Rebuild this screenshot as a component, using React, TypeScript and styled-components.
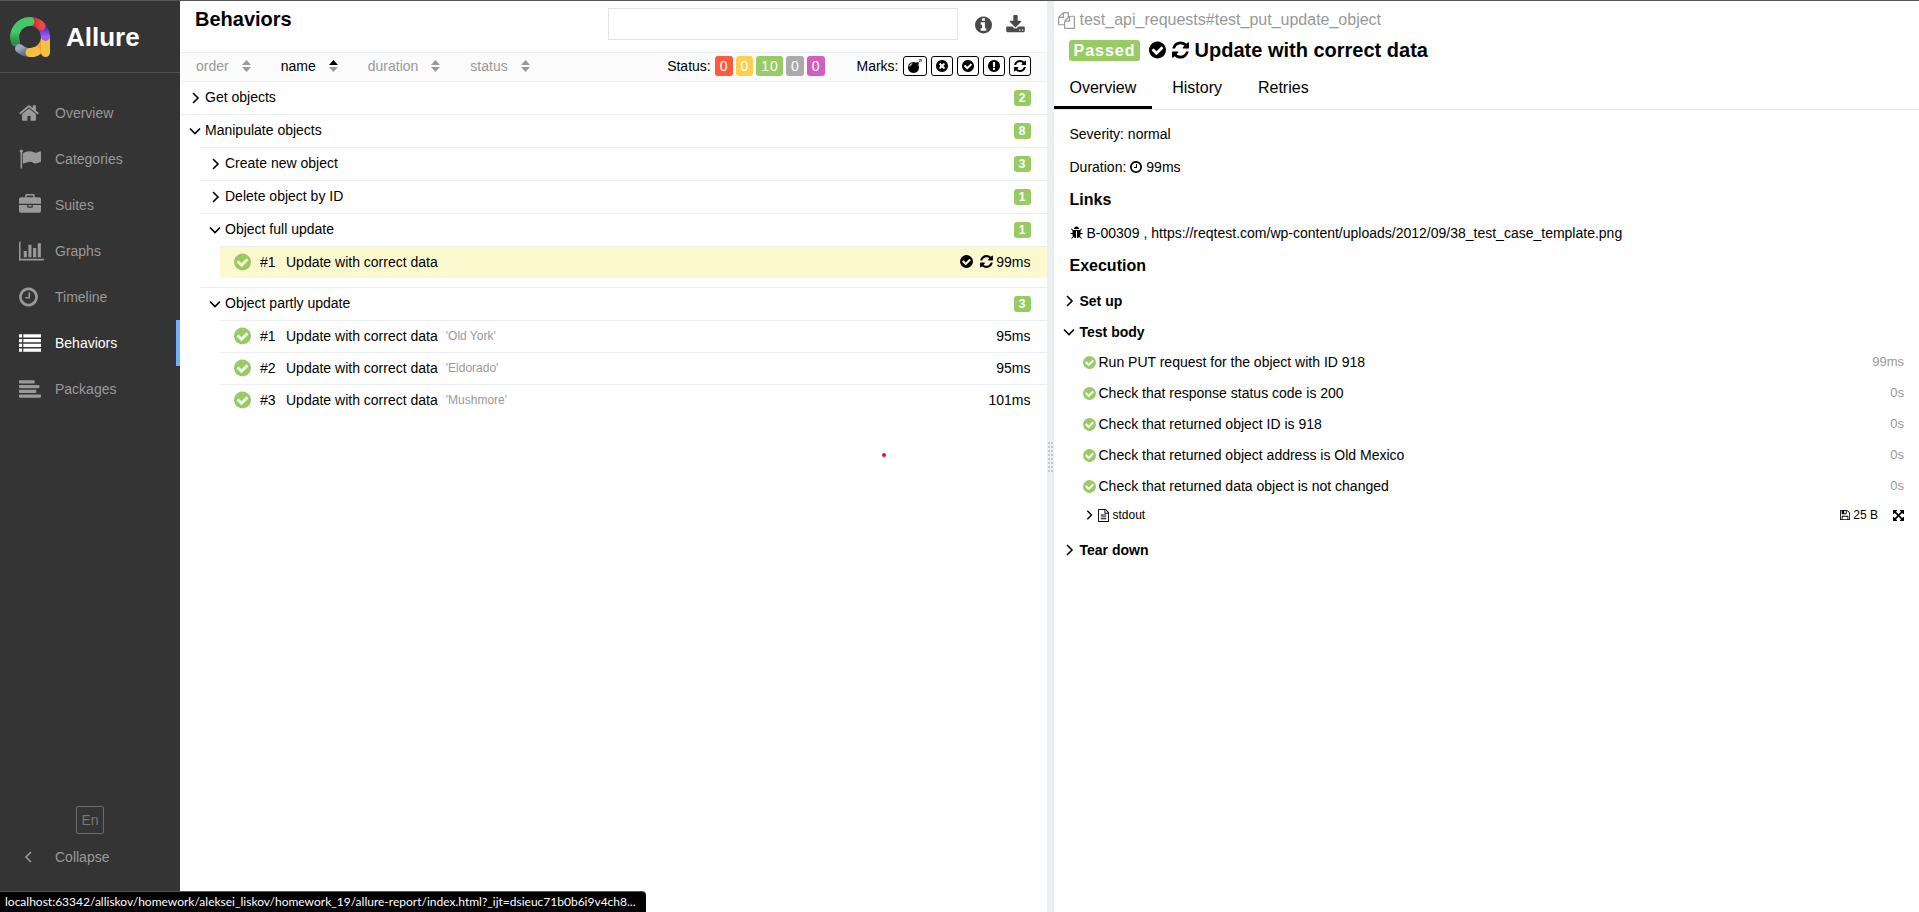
import React from 'react';
import styled, { createGlobalStyle, css } from 'styled-components';

const GlobalStyle = createGlobalStyle`
  *, *::before, *::after { box-sizing: border-box; }
  html, body, #root { height: 100%; }
  body {
    margin: 0;
    background: #fff;
    color: #000;
    font: 14px/20px "Liberation Sans", Arial, sans-serif;
  }
  button, input { font: inherit; color: inherit; }
  a { color: inherit; text-decoration: none; }
  ul { list-style: none; margin: 0; padding: 0; }
  h1, h2, h3, p { margin: 0; }
`;

/* ---------- icons ---------- */

const DISC =
  'M896 128q209 0 385.5 103t279.5 279.5 103 385.5-103 385.5-279.5 279.5-385.5 103-385.5-103-279.5-279.5-103-385.5 103-385.5 279.5-279.5 385.5-103z';

type Glyph = { d: string; x?: number; w?: number };

const glyphs = {
  home: {
    x: 64,
    w: 1664,
    d: 'M1472 992v480q0 26-19 45t-45 19h-384v-384h-256v384h-384q-26 0-45-19t-19-45v-480q0-1 .5-3t.5-3l575-474 575 474q1 2 1 6zm223-69l-62 74q-8 9-21 11h-3q-13 0-21-7l-692-577-692 577q-12 8-24 7-13-2-21-11l-62-74q-8-10-7-23.5t11-21.5l719-599q32-26 76-26t76 26l244 204v-195q0-14 9-23t23-9h192q14 0 23 9t9 23v408l219 182q10 8 11 21.5t-7 23.5z',
  },
  flag: {
    d: 'M320 256q0 72-64 110v1266q0 13-9.5 22.5t-22.5 9.5h-64q-13 0-22.5-9.5t-9.5-22.5v-1266q-64-38-64-110 0-53 37.5-90.5t90.5-37.5 90.5 37.5 37.5 90.5zm1472 64v763q0 25-12.5 38.5t-39.5 27.5q-215 116-369 116-61 0-123.5-22t-108.5-48-115.5-48-142.5-22q-192 0-464 146-17 9-33 9-26 0-45-19t-19-45v-742q0-32 31-55 21-14 79-43 236-120 421-120 107 0 200 29t219 88q38 19 88 19 54 0 117.5-21t110-47 88-47 54.5-21q26 0 45 19t19 45z',
  },
  briefcase: {
    d: 'M640 256h512v-128h-512v128zm1152 640v480q0 66-47 113t-113 47h-1472q-66 0-113-47t-47-113v-480h672v160q0 26 19 45t45 19h320q26 0 45-19t19-45v-160h672zm-768 0v128h-256v-128h256zm768-480v384h-1792v-384q0-66 47-113t113-47h352v-160q0-40 28-68t68-28h576q40 0 68 28t28 68v160h352q66 0 113 47t47 113z',
  },
  chart: {
    w: 2048,
    d: 'M640 896v512h-256v-512h256zm384-512v1024h-256v-1024h256zm1024 1152v128h-2048v-1536h128v1408h1920zm-640-896v768h-256v-768h256zm384-384v1152h-256v-1152h256z',
  },
  clock: {
    x: 128,
    w: 1536,
    d: 'M1024 544v448q0 14-9 23t-23 9h-320q-14 0-23-9t-9-23v-64q0-14 9-23t23-9h224v-352q0-14 9-23t23-9h64q14 0 23 9t9 23zm416 352q0-148-73-273t-198-198-273-73-273 73-198 198-73 273 73 273 198 198 273 73 273-73 198-198 73-273zm224 0q0 209-103 385.5t-279.5 279.5-385.5 103-385.5-103-279.5-279.5-103-385.5 103-385.5 279.5-279.5 385.5-103 385.5 103 279.5 279.5 103 385.5z',
  },
  list: {
    d: 'M0 192h256v256h-256zM352 192h1440v256h-1440zM0 576h256v256h-256zM352 576h1440v256h-1440zM0 960h256v256h-256zM352 960h1440v256h-1440zM0 1344h256v256h-256zM352 1344h1440v256h-1440z',
  },
  alignLeft: {
    d: 'M64 192h1152q64 0 64 64v128q0 64-64 64h-1152q-64 0-64-64v-128q0-64 64-64zM64 576h1536q64 0 64 64v128q0 64-64 64h-1536q-64 0-64-64v-128q0-64 64-64zM64 960h1280q64 0 64 64v128q0 64-64 64h-1280q-64 0-64-64v-128q0-64 64-64zM64 1344h1664q64 0 64 64v128q0 64-64 64h-1664q-64 0-64-64v-128q0-64 64-64z',
  },
  check: {
    x: 128,
    w: 1536,
    d:
      DISC +
      'M1412 734q0-28-18-46l-91-90q-19-19-45-19t-45 19l-408 407-226-226q-19-19-45-19t-45 19l-91 90q-18 18-18 46 0 27 18 45l362 362q19 19 45 19 27 0 46-19l543-543q18-18 18-45z',
  },
  times: {
    x: 128,
    w: 1536,
    d:
      DISC +
      'M1277 1122q0-26-19-45l-181-181 181-181q19-19 19-45 0-27-19-46l-90-90q-19-19-46-19-26 0-45 19l-181 181-181-181q-19-19-45-19-27 0-46 19l-90 90q-19 19-19 46 0 26 19 45l181 181-181 181q-19 19-19 45 0 27 19 46l90 90q19 19 46 19 26 0 45-19l181-181 181 181q19 19 45 19 27 0 46-19l90-90q19-19 19-46z',
  },
  info: {
    x: 128,
    w: 1536,
    d:
      DISC +
      'M1152 1376v-160q0-14-9-23t-23-9h-96v-512q0-14-9-23t-23-9h-320q-14 0-23 9t-9 23v160q0 14 9 23t23 9h96v320h-96q-14 0-23 9t-9 23v160q0 14 9 23t23 9h448q14 0 23-9t9-23zm-128-896v-160q0-14-9-23t-23-9h-192q-14 0-23 9t-9 23v160q0 14 9 23t23 9h192q14 0 23-9t9-23z',
  },
  exclamation: {
    x: 128,
    w: 1536,
    d:
      DISC +
      'M1024 1375v-190q0-14-9.5-23.5t-22.5-9.5h-192q-13 0-23 10t-10 23v190q0 13 10 23t23 10h192q13 0 22.5-9.5t9.5-23.5zm-2-344l18-621q0-12-10-18-10-8-24-8h-220q-14 0-24 8-10 6-10 18l17 621q0 10 10 17.5t24 7.5h185q14 0 23.5-7.5t10.5-17.5z',
  },
  refresh: {
    x: 128,
    w: 1536,
    d: 'M1639 1056q0 5-1 7-64 268-268 434.5t-478 166.5q-146 0-282.5-55t-243.5-157l-129 129q-19 19-45 19t-45-19-19-45v-448q0-26 19-45t45-19h448q26 0 45 19t19 45-19 45l-137 137q71 66 161 102t187 36q134 0 250-65t186-179q11-17 53-117 8-23 30-23h192q13 0 22.5 9.5t9.5 22.5zm25-800v448q0 26-19 45t-45 19h-448q-26 0-45-19t-19-45 19-45l138-138q-148-137-349-137-134 0-250 65t-186 179q-11 17-53 117-8 23-30 23h-199q-13 0-22.5-9.5t-9.5-22.5v-7q65-268 270-434.5t480-166.5q146 0 284 55.5t245 156.5l130-129q19-19 45-19t45 19 19 45z',
  },
  download: {
    x: 64,
    w: 1664,
    d: 'M1344 1344q0-26-19-45t-45-19-45 19-19 45 19 45 45 19 45-19 19-45zm256 0q0-26-19-45t-45-19-45 19-19 45 19 45 45 19 45-19 19-45zm128-224v320q0 40-28 68t-68 28h-1472q-40 0-68-28t-28-68v-320q0-40 28-68t68-28h465l135 136q58 56 136 56t136-56l136-136h464q40 0 68 28t28 68zm-325-569q17 41-14 70l-448 448q-18 19-45 19t-45-19l-448-448q-31-29-14-70 17-39 59-39h256v-448q0-26 19-45t45-19h256q26 0 45 19t19 45v448h256q42 0 59 39z',
  },
  bomb: {
    d: 'M571 589q-10-25-34-35t-49 0q-108 44-191 127t-127 191q-10 25 0 49t35 34q13 5 24 5 42 0 60-40 34-84 98.5-148.5t148.5-98.5q25-11 35-35t0-49zm942-356l46 46-244 243 68 68q19 19 19 45.5t-19 45.5l-64 64q89 161 89 343 0 143-55.5 273.5t-150 225-225 150-273.5 55.5-273.5-55.5-225-150-150-225-55.5-273.5 55.5-273.5 150-225 225-150 273.5-55.5q182 0 343 89l64-64q19-19 45.5-19t45.5 19l68 68zm8-56q-10 10-22 10-13 0-23-10l-91-90q-9-10-9-23t9-23q10-9 23-9t23 9l90 91q10 9 10 22.5t-10 22.5zm230 230q-11 9-23 9t-23-9l-90-91q-10-9-10-22.5t10-22.5q9-10 22.5-10t22.5 10l91 90q9 10 9 23t-9 23zm41-183q0 14-9 23t-23 9h-96q-14 0-23-9t-9-23 9-23 23-9h96q14 0 23 9t9 23zm-192-192v96q0 14-9 23t-23 9-23-9-9-23v-96q0-14 9-23t23-9 23 9 9 23zm151 55l-91 90q-10 10-22 10-13 0-23-10-10-9-10-22.5t10-22.5l90-91q10-9 23-9t23 9q9 10 9 23t-9 23z',
  },
  floppy: {
    x: 128,
    w: 1536,
    d: 'M512 1536h768v-384h-768v384zm896 0h128v-896q0-14-10-38.5t-20-34.5l-281-281q-10-10-34-20t-39-10v416q0 40-28 68t-68 28h-576q-40 0-68-28t-28-68v-416h-128v1280h128v-416q0-40 28-68t68-28h832q40 0 68 28t28 68v416zm-384-928v-320q0-13-9.5-22.5t-22.5-9.5h-192q-13 0-22.5 9.5t-9.5 22.5v320q0 13 9.5 22.5t22.5 9.5h192q13 0 22.5-9.5t9.5-22.5zm640 32v928q0 40-28 68t-68 28h-1344q-40 0-68-28t-28-68v-1344q0-40 28-68t68-28h928q40 0 88 20t76 48l280 280q28 28 48 76t20 88z',
  },
  expand: {
    x: 128,
    w: 1536,
    d: 'M1411 541l-355 355 355 355 144-144q29-31 70-14 39 17 39 59v448q0 26-19 45t-45 19h-448q-42 0-59-40-17-39 14-69l144-144-355-355-355 355 144 144q31 30 14 69-17 40-59 40h-448q-26 0-45-19t-19-45v-448q0-42 40-59 39-17 69 14l144 144 355-355-355-355-144 144q-19 19-45 19-12 0-24-5-40-17-40-59v-448q0-26 19-45t45-19h448q42 0 59 40 17 39-14 69l-144 144 355 355 355-355-144-144q-31-30-14-69 17-40 59-40h448q26 0 45 19t19 45v448q0 42-39 59-13 5-25 5-26 0-45-19z',
  },
  file: {
    x: 128,
    w: 1536,
    d: 'M1596 380q28 28 48 76t20 88v1152q0 40-28 68t-68 28h-1344q-40 0-68-28t-28-68v-1600q0-40 28-68t68-28h896q40 0 88 20t76 48zm-444-244v376h376q-10-29-22-41l-313-313q-12-12-41-22zm384 1528v-1024h-416q-40 0-68-28t-28-68v-416h-768v1536h1280zm-1024-864q0-14 9-23t23-9h704q14 0 23 9t9 23v64q0 14-9 23t-23 9h-704q-14 0-23-9t-9-23v-64zm736 224q14 0 23 9t9 23v64q0 14-9 23t-23 9h-704q-14 0-23-9t-9-23v-64q0-14 9-23t23-9h704zm0 256q14 0 23 9t9 23v64q0 14-9 23t-23 9h-704q-14 0-23-9t-9-23v-64q0-14 9-23t23-9h704z',
  },
  bug: {
    x: 64,
    w: 1664,
    d: 'M1696 960q0 26-19 45t-45 19h-224q0 171-67 290l208 209q19 19 19 45t-19 45q-18 19-45 19t-45-19l-198-197q-5 5-15 13t-42 28.5-65 36.5-82 29-97 13v-896h-128v896q-51 0-101.5-13.5t-87-33-66-39-43.5-32.5l-15-14-183 207q-20 21-48 21-24 0-43-16-19-18-20.5-44.5t15.5-46.5l202-227q-58-114-58-274h-224q-26 0-45-19t-19-45 19-45 45-19h224v-294l-173-173q-19-19-19-45t19-45 45-19 45 19l173 173h844l173-173q19-19 45-19t45 19 19 45-19 45l-173 173v294h224q26 0 45 19t19 45zm-480-576h-640q0-133 93.5-226.5t226.5-93.5 226.5 93.5 93.5 226.5z',
  },
  copy: {
    d: 'M1696 384q40 0 68 28t28 68v1216q0 40-28 68t-68 28h-960q-40 0-68-28t-28-68v-288h-544q-40 0-68-28t-28-68v-672q0-40 20-88t48-76l408-408q28-28 76-48t88-20h416q40 0 68 28t28 68v328q68-40 128-40h416zm-544 213l-299 299h299v-299zm-640-384l-299 299h299v-299zm196 647l316-316v-416h-384v416q0 40-28 68t-68 28h-416v640h512v-256q0-40 20-88t48-76zm956 804v-1152h-384v416q0 40-28 68t-68 28h-416v640h896z',
  },
} satisfies Record<string, Glyph>;

type IconName = keyof typeof glyphs;

const IconSvg = styled.svg`
  display: block;
  flex: none;
  fill: currentColor;
`;

function Icon({ name, size = 14, color }: { name: IconName; size?: number; color?: string }) {
  const { d, x = 0, w = 1792 } = glyphs[name] as Glyph;
  return (
    <IconSvg
      width={Math.round((w / 1792) * size)}
      height={size}
      viewBox={`${x} 0 ${w} 1792`}
      color={color}
      aria-hidden="true"
    >
      <path fillRule="evenodd" d={d} />
    </IconSvg>
  );
}

const ArrowSvg = styled.svg`
  display: block;
  flex: none;
  fill: none;
  stroke: currentColor;
  stroke-width: 1.6;
`;

function Arrow({ open, small }: { open?: boolean; small?: boolean }) {
  const size = small ? 10 : 12;
  return (
    <ArrowSvg width={size} height={size} viewBox="0 0 12 12" aria-hidden="true">
      <path d={open ? 'M1 3.5l5 5 5-5' : 'M4 1l5 5-5 5'} />
    </ArrowSvg>
  );
}

/* ---------- page ---------- */

const Page = styled.div`
  position: relative;
  display: flex;
  min-height: 100%;
  border-top: 1px solid #555;
`;

/* ---------- sidebar ---------- */

const Sidebar = styled.aside`
  display: flex;
  flex-direction: column;
  flex: none;
  width: 180px;
  padding-bottom: 37px;
  background: #343434;
  color: #999;
`;

const Brand = styled.a`
  display: flex;
  align-items: center;
  gap: 16px;
  height: 72px;
  padding: 0 10px;
  border-bottom: 1px solid #505050;
  color: #fff;
  font-size: 26px;
  font-weight: bold;
`;

const Nav = styled.nav`
  flex: 1;
  padding-top: 17px;
`;

const NavLink = styled.a<{ $active?: boolean }>`
  display: flex;
  align-items: center;
  height: 46px;
  padding-left: 19px;
  border-right: 4px solid transparent;
  ${({ $active }) =>
    $active &&
    css`
      border-right-color: #70b0f3;
      color: #fff;
    `}
`;

const NavIcon = styled.span`
  flex: none;
  width: 36px;
`;

const LangButton = styled.button`
  align-self: center;
  width: 28px;
  height: 28px;
  padding: 0;
  border: 1px solid #6a6a6a;
  border-radius: 2px;
  background: none;
  color: #777;
`;

const CollapseButton = styled.button`
  display: flex;
  align-items: center;
  height: 36px;
  margin-top: 5px;
  padding: 0 0 0 23px;
  border: 0;
  background: none;
`;

const CollapseIcon = styled.span`
  width: 32px;
`;

function Logo() {
  return (
    <svg width="40" height="40" viewBox="0 0 40 40" fill="none" strokeWidth="9" strokeLinecap="round" aria-hidden="true">
      <defs>
        <linearGradient id="green" x1="0" y1="0" x2="0" y2="1">
          <stop offset="0.5" stopColor="#44c869" />
          <stop offset="1" stopColor="#2f8f4c" />
        </linearGradient>
        <linearGradient id="red" x1="0" y1="0" x2="1" y2="0">
          <stop offset="0.2" stopColor="#cf3030" />
          <stop offset="1" stopColor="#e64b45" />
        </linearGradient>
        <linearGradient id="violet" x1="0" y1="0" x2="0" y2="1">
          <stop offset="0" stopColor="#6425b8" />
          <stop offset="1" stopColor="#9560f5" />
        </linearGradient>
        <linearGradient id="slate" x1="0" y1="0" x2="1" y2="1">
          <stop offset="0" stopColor="#9aa5bd" />
          <stop offset="1" stopColor="#66718a" />
        </linearGradient>
        <linearGradient id="amber" x1="0" y1="0" x2="1" y2="0">
          <stop offset="0.3" stopColor="#f7bf3f" />
          <stop offset="1" stopColor="#e08a2c" />
        </linearGradient>
      </defs>
      <path d="M35.5 20A15.5 15.5 0 0 1 20 35.5" stroke="url(#amber)" />
      <path d="M35.5 21V35.5" stroke="#f5c042" />
      <path d="M32 10.5A15.5 15.5 0 0 1 35.5 19.5" stroke="url(#violet)" />
      <path d="M22 4.5A15.5 15.5 0 0 1 31 9" stroke="url(#red)" />
      <path d="M5.5 25A15.5 15.5 0 0 1 20 4.5" stroke="url(#green)" />
      <path d="M9.5 31.5A15.5 15.5 0 0 0 16 35" stroke="url(#slate)" />
      <path d="M20 35.5A15.5 15.5 0 0 0 26 34.5" stroke="#f7bf3f" />
    </svg>
  );
}

const navItems: { icon: IconName; label: string; active?: boolean }[] = [
  { icon: 'home', label: 'Overview' },
  { icon: 'flag', label: 'Categories' },
  { icon: 'briefcase', label: 'Suites' },
  { icon: 'chart', label: 'Graphs' },
  { icon: 'clock', label: 'Timeline' },
  { icon: 'list', label: 'Behaviors', active: true },
  { icon: 'alignLeft', label: 'Packages' },
];

/* ---------- tree pane ---------- */

const TreePane = styled.main`
  flex: 0 1 calc(50% - 93px);
  min-width: 0;
`;

const TreeHeader = styled.header`
  display: flex;
  align-items: flex-start;
  height: 51px;
  padding: 7px 22px 0 15px;
`;

const Title = styled.h1`
  flex: 1;
  font-size: 20px;
  line-height: 22px;
`;

const Search = styled.input`
  width: 350px;
  height: 32px;
  margin-right: 17px;
  padding: 0 8px;
  border: 1px solid #e5e5e5;
  background: #fff;
`;

const ToolButton = styled.button`
  display: flex;
  align-items: center;
  height: 32px;
  margin-right: 14px;
  padding: 2px 0 0;
  border: 0;
  background: none;
  color: #4a4a4a;
  &:last-child { margin-right: 0; }
`;

const Controls = styled.div`
  display: flex;
  align-items: center;
  height: 29px;
  padding: 0 16px 2px;
  border-top: 1px solid #eceff1;
  background: #fbfbfb;
`;

const Sorters = styled.div`
  display: flex;
  flex: 1;
  gap: 30px;
`;

const Sorter = styled.button<{ $active?: boolean }>`
  display: flex;
  align-items: center;
  gap: 13px;
  padding: 0;
  border: 0;
  background: none;
  color: ${({ $active }) => ($active ? '#000' : '#999')};
`;

const FilterGroup = styled.div`
  display: flex;
  align-items: center;
  gap: 4px;
  margin-left: 32px;
`;

const CountList = styled.div`
  display: flex;
  gap: 3px;
`;

const CountButton = styled.button<{ $color: string }>`
  height: 20px;
  padding: 0 4px 0 5px;
  border: 0;
  border-radius: 3px;
  background: ${({ $color }) => $color};
  color: #fff;
  letter-spacing: 1px;
`;

const MarkButton = styled.button`
  display: flex;
  align-items: center;
  height: 20px;
  padding: 0 4px;
  border: 1px solid #000;
  border-radius: 3px;
  background: #fff;
`;

const SubTree = styled.ul<{ $leaves?: boolean }>`
  margin-left: 20px;
  padding-bottom: ${({ $leaves }) => ($leaves ? 9 : 0)}px;
`;

const GroupRow = styled.button`
  display: flex;
  align-items: center;
  width: 100%;
  height: 33px;
  padding: 0 16px 0 9px;
  border: 0;
  border-top: 1px solid #eceff1;
  background: none;
  text-align: left;
`;

const GroupName = styled.span`
  flex: 1;
  margin: 0 0 2px 4px;
`;

const CountBadge = styled.span`
  width: 17px;
  border-radius: 3px;
  background: #97cc64;
  color: #fff;
  font-size: 12px;
  font-weight: bold;
  line-height: 16px;
  text-align: center;
`;

const LeafRow = styled.a<{ $active?: boolean }>`
  display: flex;
  align-items: center;
  height: 32px;
  padding: 0 16px 2px 14px;
  border-top: 1px solid #eceff1;
  background: ${({ $active }) => ($active ? '#fdf9ce' : 'none')};
`;

const LeafOrder = styled.span`
  width: 26px;
  margin-left: 9px;
`;

const LeafParam = styled.span`
  margin-left: 8px;
  color: #999;
  font-size: 12px;
`;

const LeafMeta = styled.span`
  display: flex;
  align-items: center;
  gap: 3px;
  margin-left: auto;
`;

const MarkGap = styled.span`
  margin-right: 4px;
`;

type SortState = 'up' | undefined;

function SortMark({ state }: { state: SortState }) {
  return (
    <svg width="9" height="12" viewBox="0 0 9 12" aria-hidden="true">
      <path d="M0 5L4.5 0 9 5z" fill={state === 'up' ? '#000' : '#999'} />
      <path d="M0 7h9L4.5 12z" fill="#999" />
    </svg>
  );
}

const sorters: { label: string; state?: SortState }[] = [
  { label: 'order' },
  { label: 'name', state: 'up' },
  { label: 'duration' },
  { label: 'status' },
];

const statuses = [
  { name: 'failed', color: '#fd5a3e', count: 0 },
  { name: 'broken', color: '#ffd050', count: 0 },
  { name: 'passed', color: '#97cc64', count: 10 },
  { name: 'skipped', color: '#aaa', count: 0 },
  { name: 'unknown', color: '#d35ebe', count: 0 },
];

const marks: { icon: IconName; label: string }[] = [
  { icon: 'bomb', label: 'Flaky' },
  { icon: 'times', label: 'New failed' },
  { icon: 'check', label: 'New passed' },
  { icon: 'exclamation', label: 'New broken' },
  { icon: 'refresh', label: 'Retries' },
];

type Leaf = { order: number; param?: string; time: string; active?: boolean };
type Group = { name: string; count: number; groups?: Group[]; leaves?: Leaf[] };

const tree: Group[] = [
  { name: 'Get objects', count: 2 },
  {
    name: 'Manipulate objects',
    count: 8,
    groups: [
      { name: 'Create new object', count: 3 },
      { name: 'Delete object by ID', count: 1 },
      { name: 'Object full update', count: 1, leaves: [{ order: 1, time: '99ms', active: true }] },
      {
        name: 'Object partly update',
        count: 3,
        leaves: [
          { order: 1, param: "'Old York'", time: '95ms' },
          { order: 2, param: "'Eldorado'", time: '95ms' },
          { order: 3, param: "'Mushmore'", time: '101ms' },
        ],
      },
    ],
  },
];

function TreeLeaf({ order, param, time, active }: Leaf) {
  return (
    <li>
      <LeafRow href="#" $active={active}>
        <Icon name="check" size={20} color="#97cc64" />
        <LeafOrder>#{order}</LeafOrder>
        <span>Update with correct data</span>
        {param && <LeafParam>{param}</LeafParam>}
        <LeafMeta>
          {active && (
            <>
              <MarkGap>
                <Icon name="check" size={15} />
              </MarkGap>
              <Icon name="refresh" size={15} />
            </>
          )}
          {time}
        </LeafMeta>
      </LeafRow>
    </li>
  );
}

function TreeGroup({ name, count, groups, leaves }: Group) {
  const open = Boolean(groups || leaves);
  return (
    <li>
      <GroupRow type="button" aria-expanded={open}>
        <Arrow open={open} />
        <GroupName>{name}</GroupName>
        <CountBadge>{count}</CountBadge>
      </GroupRow>
      {groups && (
        <SubTree>
          {groups.map((g) => (
            <TreeGroup key={g.name} {...g} />
          ))}
        </SubTree>
      )}
      {leaves && (
        <SubTree $leaves>
          {leaves.map((l) => (
            <TreeLeaf key={l.order} {...l} />
          ))}
        </SubTree>
      )}
    </li>
  );
}

/* ---------- splitter ---------- */

const Splitter = styled.div`
  display: flex;
  align-items: center;
  justify-content: center;
  flex: none;
  width: 7px;
  background: #eceff1;
`;

function Grip() {
  return (
    <svg width="5" height="30" viewBox="0 0 5 30" fill="#c6c9cb" aria-hidden="true">
      {Array.from({ length: 8 }, (_, i) => (
        <path key={i} d={`M0 ${i * 4}h2v2h-2zM3 ${i * 4}h2v2h-2z`} />
      ))}
    </svg>
  );
}

/* ---------- details pane ---------- */

const DetailsPane = styled.section`
  flex: 1;
  min-width: 0;
`;

const FullName = styled.div`
  display: flex;
  align-items: center;
  gap: 5px;
  padding: 9px 0 0 4px;
  color: #999;
  font-size: 16px;
`;

const CaseTitle = styled.h2`
  display: flex;
  align-items: center;
  gap: 6px;
  padding: 8px 15px 0;
  font-size: 20px;
  line-height: 24px;
`;

const StatusBadge = styled.span`
  margin-right: 3px;
  padding: 0 4px 0 5px;
  border-radius: 3px;
  background: #97cc64;
  color: #fff;
  font-size: 16px;
  letter-spacing: 1px;
  line-height: 21px;
`;

const Tabs = styled.div`
  display: flex;
  gap: 4px;
  height: 48px;
  border-bottom: 1px solid #e5e5e5;
`;

const Tab = styled.button<{ $active?: boolean }>`
  padding: 8px 16px 0;
  border: 0;
  border-bottom: 3px solid ${({ $active }) => ($active ? '#000' : 'transparent')};
  background: none;
  font-size: 16px;
`;

const Details = styled.div`
  padding: 1px 15px 0 16px;
`;

const Line = styled.p`
  display: flex;
  align-items: center;
  gap: 4px;
  margin: 13px 0 12px;
`;

const SectionTitle = styled.h3`
  margin: 13px 0 9px;
  font-size: 16px;
`;

const StageButton = styled.button`
  display: flex;
  align-items: center;
  gap: 5px;
  width: 100%;
  height: 31px;
  margin-left: -7px;
  padding: 0;
  border: 0;
  background: none;
  font-weight: bold;
`;

const Step = styled.li`
  display: flex;
  align-items: center;
  gap: 3px;
  height: 31px;
  padding: 0 0 1px 13px;
`;

const StepTime = styled.span`
  margin-left: auto;
  color: #999;
  font-size: 13px;
`;

const Attachment = styled.li`
  display: flex;
  align-items: center;
  gap: 4px;
  height: 26px;
  margin-bottom: 6px;
  padding-left: 14px;
  font-size: 12px;
`;

const AttachmentToggle = styled.button`
  display: flex;
  align-items: center;
  flex: 1;
  gap: 4px;
  padding: 0;
  border: 0;
  background: none;
`;

const AttachmentLink = styled.a`
  display: flex;
  align-items: center;
  gap: 3px;
`;

const ExpandButton = styled.button`
  margin-left: 11px;
  padding: 0;
  border: 0;
  background: none;
`;

const steps = [
  { text: 'Run PUT request for the object with ID 918', time: '99ms' },
  { text: 'Check that response status code is 200', time: '0s' },
  { text: 'Check that returned object ID is 918', time: '0s' },
  { text: 'Check that returned object address is Old Mexico', time: '0s' },
  { text: 'Check that returned data object is not changed', time: '0s' },
];

/* ---------- overlays ---------- */

const LinkPreview = styled.div`
  position: absolute;
  bottom: 0;
  left: 0;
  padding: 0 10px 0 5px;
  border-top: 1px solid #555;
  border-top-right-radius: 4px;
  background: #000;
  color: #fff;
  font: 12px/20px Lato, "Open Sans", sans-serif;
  white-space: nowrap;
`;

const Pointer = styled.span`
  position: absolute;
  top: 452px;
  left: 882px;
  width: 4px;
  height: 4px;
  border-radius: 2px;
  background: #f01020;
`;

export default function App() {
  return (
    <>
      <GlobalStyle />
      <Page>
        <Sidebar>
          <Brand href="#">
            <Logo />
            Allure
          </Brand>
          <Nav>
            {navItems.map(({ icon, label, active }) => (
              <NavLink key={label} href="#" $active={active}>
                <NavIcon>
                  <Icon name={icon} size={22} />
                </NavIcon>
                {label}
              </NavLink>
            ))}
          </Nav>
          <LangButton type="button">En</LangButton>
          <CollapseButton type="button">
            <CollapseIcon>
              <ArrowSvg width="10" height="12" viewBox="0 0 10 12" aria-hidden="true">
                <path d="M8 1l-5 5 5 5" />
              </ArrowSvg>
            </CollapseIcon>
            Collapse
          </CollapseButton>
        </Sidebar>

        <TreePane>
          <TreeHeader>
            <Title>Behaviors</Title>
            <Search type="search" aria-label="Search" />
            <ToolButton type="button" aria-label="Info">
              <Icon name="info" size={20} />
            </ToolButton>
            <ToolButton type="button" aria-label="Download CSV">
              <Icon name="download" size={20} />
            </ToolButton>
          </TreeHeader>
          <Controls>
            <Sorters>
              {sorters.map(({ label, state }) => (
                <Sorter key={label} type="button" $active={Boolean(state)}>
                  {label}
                  <SortMark state={state} />
                </Sorter>
              ))}
            </Sorters>
            <FilterGroup>
              Status:
              <CountList>
                {statuses.map(({ name, color, count }) => (
                  <CountButton key={name} type="button" title={name} $color={color}>
                    {count}
                  </CountButton>
                ))}
              </CountList>
            </FilterGroup>
            <FilterGroup>
              Marks:
              {marks.map(({ icon, label }) => (
                <MarkButton key={label} type="button" aria-label={label}>
                  <Icon name={icon} />
                </MarkButton>
              ))}
            </FilterGroup>
          </Controls>
          <ul>
            {tree.map((g) => (
              <TreeGroup key={g.name} {...g} />
            ))}
          </ul>
        </TreePane>

        <Splitter>
          <Grip />
        </Splitter>

        <DetailsPane>
          <FullName>
            <Icon name="copy" size={17} />
            test_api_requests#test_put_update_object
          </FullName>
          <CaseTitle>
            <StatusBadge>Passed</StatusBadge>
            <Icon name="check" size={20} />
            <Icon name="refresh" size={20} />
            Update with correct data
          </CaseTitle>
          <Tabs role="tablist">
            <Tab type="button" role="tab" aria-selected="true" $active>
              Overview
            </Tab>
            <Tab type="button" role="tab" aria-selected="false">
              History
            </Tab>
            <Tab type="button" role="tab" aria-selected="false">
              Retries
            </Tab>
          </Tabs>
          <Details>
            <Line>Severity: normal</Line>
            <Line>
              Duration: <Icon name="clock" /> 99ms
            </Line>
            <SectionTitle>Links</SectionTitle>
            <Line>
              <Icon name="bug" />
              <a href="#">B-00309</a>
              <span>,</span>
              <a href="#">https://reqtest.com/wp-content/uploads/2012/09/38_test_case_template.png</a>
            </Line>
            <SectionTitle>Execution</SectionTitle>
            <StageButton type="button" aria-expanded="false">
              <Arrow />
              Set up
            </StageButton>
            <StageButton type="button" aria-expanded="true">
              <Arrow open />
              Test body
            </StageButton>
            <ul>
              {steps.map(({ text, time }) => (
                <Step key={text}>
                  <Icon name="check" size={15} color="#97cc64" />
                  {text}
                  <StepTime>{time}</StepTime>
                </Step>
              ))}
              <Attachment>
                <AttachmentToggle type="button" aria-expanded="false">
                  <Arrow small />
                  <Icon name="file" size={13} />
                  stdout
                </AttachmentToggle>
                <AttachmentLink href="#">
                  <Icon name="floppy" size={12} />
                  25 B
                </AttachmentLink>
                <ExpandButton type="button" aria-label="Full screen">
                  <Icon name="expand" size={13} />
                </ExpandButton>
              </Attachment>
            </ul>
            <StageButton type="button" aria-expanded="false">
              <Arrow />
              Tear down
            </StageButton>
          </Details>
        </DetailsPane>

        <Pointer />
        <LinkPreview>localhost:63342/alliskov/homework/aleksei_liskov/homework_19/allure-report/index.html?_ijt=dsieuc71b0b6i9v4ch8...</LinkPreview>
      </Page>
    </>
  );
}
